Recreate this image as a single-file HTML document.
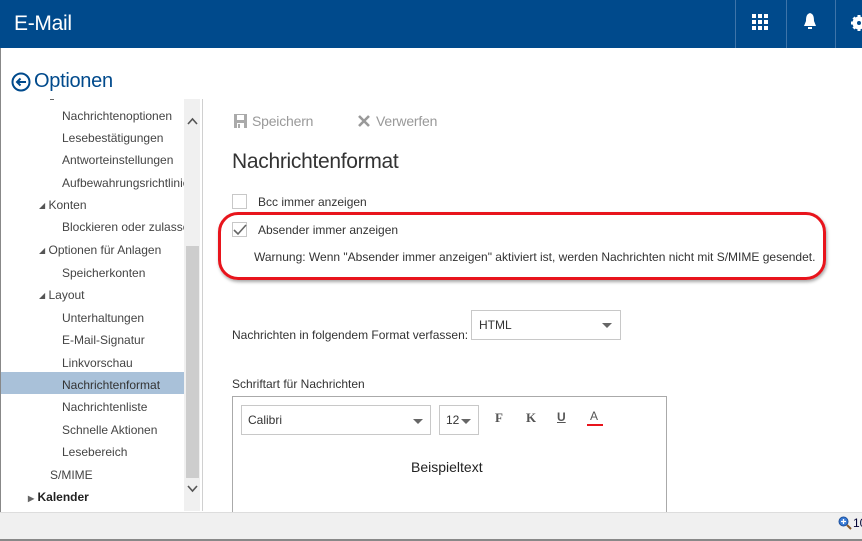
<!DOCTYPE html>
<html><head><meta charset="utf-8"><style>
*{margin:0;padding:0;box-sizing:border-box}
body{width:862px;height:541px;overflow:hidden;background:#fff;font-family:"Liberation Sans",sans-serif;color:#333;position:relative}
.a{position:absolute;white-space:nowrap}
.hdr{left:0;top:0;width:862px;height:48px;background:#004a8c}
.sep{top:0;width:1px;height:48px;background:#3e74a9}
.nav{font-size:12px;color:#444}
.tri{font-size:8px;color:#555;vertical-align:1px}
.cb{width:15px;height:15px;border:1px solid #c8c8c8;background:#fff}
</style></head><body>
<div class="a hdr"></div>
<div class="a" style="left:14px;top:12px;font-size:21px;color:#fff;letter-spacing:-0.3px">E-Mail</div>
<div class="a sep" style="left:735px"></div>
<div class="a sep" style="left:786px"></div>
<div class="a sep" style="left:835px"></div>
<svg class="a" style="left:752px;top:14px" width="16" height="16"><g fill="#fff"><rect x="0" y="0" width="4" height="4"/><rect x="6" y="0" width="4" height="4"/><rect x="12" y="0" width="4" height="4"/><rect x="0" y="6" width="4" height="4"/><rect x="6" y="6" width="4" height="4"/><rect x="12" y="6" width="4" height="4"/><rect x="0" y="12" width="4" height="4"/><rect x="6" y="12" width="4" height="4"/><rect x="12" y="12" width="4" height="4"/></g></svg>
<svg class="a" style="left:803px;top:13px" width="14" height="18"><path d="M7 0C3.5 1 3 4 3 8L1 13H13L11 8C11 4 10.5 1 7 0Z" fill="#fff"/><rect x="5" y="14" width="4" height="2" fill="#fff"/></svg>
<svg class="a" style="left:850px;top:13px" width="12" height="20"><circle cx="9" cy="10" r="5" fill="none" stroke="#fff" stroke-width="3"/><path d="M9 2V18M1 10H17M3.5 4.5L14.5 15.5M14.5 4.5L3.5 15.5" stroke="#fff" stroke-width="3"/><circle cx="9" cy="10" r="2" fill="#004a8c"/></svg>
<div class="a" style="left:0;top:48px;width:1px;height:470px;background:#888"></div>
<svg class="a" style="left:11px;top:72px" width="20" height="20"><circle cx="10" cy="10" r="8.5" fill="none" stroke="#004a8c" stroke-width="2"/><path d="M15 10H6M9.5 6.5L6 10L9.5 13.5" fill="none" stroke="#004a8c" stroke-width="2"/></svg>
<div class="a" style="left:34px;top:70px;font-size:20px;color:#004a8c;letter-spacing:-0.3px">Optionen</div>
<div class="a" style="left:50px;top:99px;width:4px;height:1px;background:#666"></div>
<div class="a nav" style="left:62px;top:109px">Nachrichtenoptionen</div>
<div class="a nav" style="left:62px;top:131px">Lesebestätigungen</div>
<div class="a nav" style="left:62px;top:153px">Antworteinstellungen</div>
<div class="a nav" style="left:62px;top:176px;width:122px;overflow:hidden">Aufbewahrungsrichtlinien</div>
<div class="a nav" style="left:39px;top:198px"><span class="tri">◢</span> Konten</div>
<div class="a nav" style="left:62px;top:220px;width:122px;overflow:hidden">Blockieren oder zulassen</div>
<div class="a nav" style="left:39px;top:243px"><span class="tri">◢</span> Optionen für Anlagen</div>
<div class="a nav" style="left:62px;top:266px">Speicherkonten</div>
<div class="a nav" style="left:39px;top:288px"><span class="tri">◢</span> Layout</div>
<div class="a nav" style="left:62px;top:311px">Unterhaltungen</div>
<div class="a nav" style="left:62px;top:333px">E-Mail-Signatur</div>
<div class="a nav" style="left:62px;top:356px">Linkvorschau</div>
<div class="a" style="left:1px;top:372px;width:183px;height:22px;background:#a9c1d9"></div>
<div class="a nav" style="left:62px;top:378px;color:#333">Nachrichtenformat</div>
<div class="a nav" style="left:62px;top:400px">Nachrichtenliste</div>
<div class="a nav" style="left:62px;top:423px">Schnelle Aktionen</div>
<div class="a nav" style="left:62px;top:445px">Lesebereich</div>
<div class="a nav" style="left:50px;top:468px">S/MIME</div>
<div class="a" style="left:28px;top:490px;font-size:12px;font-weight:bold;color:#222"><span style="font-size:8px;color:#666">▶</span> Kalender</div>
<div class="a" style="left:184px;top:99px;width:16px;height:412px;background:#f0f0f0"></div>
<div class="a" style="left:186px;top:246px;width:13px;height:232px;background:#cdcdcd"></div>
<svg class="a" style="left:187px;top:117px" width="11" height="8"><path d="M1 7L5.5 2L10 7" fill="none" stroke="#555" stroke-width="1.6"/></svg>
<svg class="a" style="left:187px;top:485px" width="11" height="8"><path d="M1 1L5.5 6L10 1" fill="none" stroke="#555" stroke-width="1.6"/></svg>
<div class="a" style="left:202px;top:99px;width:1px;height:412px;background:#d0d0d0"></div>
<svg class="a" style="left:234px;top:114px" width="13" height="14"><path d="M0 0H13V14H0Z" fill="#aaa"/><rect x="3" y="1" width="7" height="5" fill="#fff"/><rect x="3" y="9" width="7" height="5" fill="#fff"/><rect x="4" y="10" width="2" height="4" fill="#aaa"/></svg>
<div class="a" style="left:252px;top:113px;font-size:14px;color:#999;letter-spacing:-0.2px">Speichern</div>
<svg class="a" style="left:358px;top:115px" width="12" height="12"><path d="M1 1L11 11M11 1L1 11" stroke="#999" stroke-width="2.6"/></svg>
<div class="a" style="left:376px;top:113px;font-size:14px;color:#999;letter-spacing:-0.2px">Verwerfen</div>
<div class="a" style="left:232px;top:150px;font-size:21px;color:#333;letter-spacing:-0.3px">Nachrichtenformat</div>
<div class="a cb" style="left:232px;top:194px"></div>
<div class="a" style="left:258px;top:195px;font-size:12px">Bcc immer anzeigen</div>
<div class="a cb" style="left:232px;top:222px"></div>
<svg class="a" style="left:233px;top:224px" width="14" height="12"><path d="M1 6L5 10L13 1" fill="none" stroke="#666" stroke-width="1.6"/></svg>
<div class="a" style="left:258px;top:223px;font-size:12px">Absender immer anzeigen</div>
<div class="a" style="left:254px;top:250px;font-size:12px;letter-spacing:0px">Warnung: Wenn "Absender immer anzeigen" aktiviert ist, werden Nachrichten nicht mit S/MIME gesendet.</div>
<div class="a" style="left:218px;top:212px;width:608px;height:68px;border:3px solid #e8141c;border-radius:20px;box-shadow:1px 2px 3px rgba(0,0,0,.35)"></div>
<div class="a" style="left:232px;top:328px;font-size:12px">Nachrichten in folgendem Format verfassen:</div>
<div class="a" style="left:471px;top:310px;width:150px;height:30px;border:1px solid #c8c8c8"></div>
<div class="a" style="left:479px;top:318px;font-size:12px">HTML</div>
<div class="a" style="left:602px;top:323px;border-left:5px solid transparent;border-right:5px solid transparent;border-top:5px solid #666"></div>
<div class="a" style="left:232px;top:377px;font-size:12px">Schriftart für Nachrichten</div>
<div class="a" style="left:232px;top:396px;width:435px;height:120px;border:1px solid #aaa;border-bottom:none"></div>
<div class="a" style="left:241px;top:405px;width:190px;height:30px;border:1px solid #c8c8c8"></div>
<div class="a" style="left:248px;top:413px;font-size:12px">Calibri</div>
<div class="a" style="left:413px;top:419px;border-left:5px solid transparent;border-right:5px solid transparent;border-top:5px solid #666"></div>
<div class="a" style="left:439px;top:405px;width:40px;height:30px;border:1px solid #c8c8c8"></div>
<div class="a" style="left:446px;top:413px;font-size:12px">12</div>
<div class="a" style="left:461px;top:419px;border-left:5px solid transparent;border-right:5px solid transparent;border-top:5px solid #666"></div>
<div class="a" style="left:495px;top:410px;font:bold 13px 'Liberation Serif',serif;color:#555">F</div>
<div class="a" style="left:526px;top:410px;font:bold 13px 'Liberation Serif',serif;color:#555">K</div>
<div class="a" style="left:557px;top:410px;font-size:12px;font-weight:bold;color:#555;text-decoration:underline">U</div>
<div class="a" style="left:590px;top:409px;font-size:12px;color:#555">A</div>
<div class="a" style="left:587px;top:424px;width:16px;height:2px;background:#e8141c"></div>
<div class="a" style="left:411px;top:459px;font-size:14px;color:#222">Beispieltext</div>
<div class="a" style="left:0;top:512px;width:862px;height:29px;background:#f0f0f0;border-top:1px solid #ddd;border-bottom:2px solid #888"></div>
<svg class="a" style="left:838px;top:516px" width="14" height="14"><circle cx="5.5" cy="5.5" r="4.5" fill="#3a7bd5" stroke="#1c4f9a"/><path d="M3 5.5H8M5.5 3V8" stroke="#fff" stroke-width="1.3"/><path d="M9 9L13 13" stroke="#8a5a2b" stroke-width="2"/></svg>
<div class="a" style="left:853px;top:516px;font-size:12px;color:#003">10</div>
</body></html>
